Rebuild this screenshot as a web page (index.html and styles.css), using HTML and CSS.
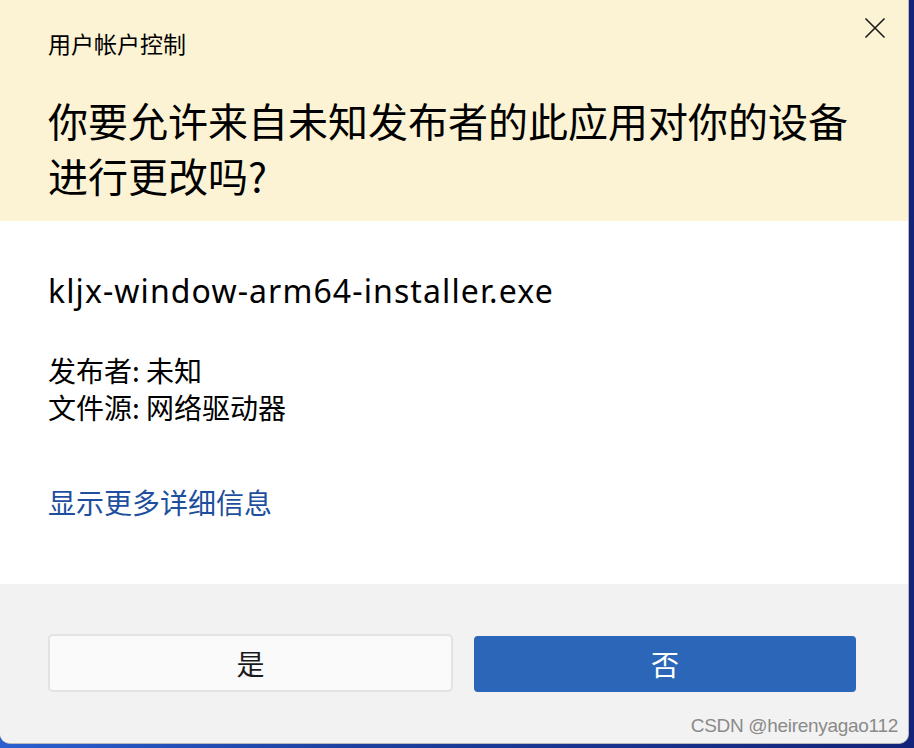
FILE: index.html
```html
<!DOCTYPE html>
<html lang="zh-CN">
<head>
<meta charset="utf-8">
<title>用户帐户控制</title>
<link rel="stylesheet" href="styles.css">
</head>
<body>
<div class="dialog">
  <header class="header">
    <div class="top-row">
      <div class="uac-label">用户帐户控制</div>
      <button class="close" aria-label="关闭">
        <svg width="22" height="22" viewBox="0 0 22 22"><path d="M1.5 1.5 L20.5 20.5 M20.5 1.5 L1.5 20.5" stroke="#1a1a1a" stroke-width="1.6" fill="none"/></svg>
      </button>
    </div>
    <h1 class="title">你要允许来自未知发布者的此应用对你的设备进行更改吗?</h1>
  </header>
  <section class="body">
    <div class="filename">kljx-window-arm64-installer.exe</div>
    <div class="meta">
      <div>发布者: 未知</div>
      <div>文件源: 网络驱动器</div>
    </div>
    <a class="more" href="#">显示更多详细信息</a>
  </section>
  <footer class="footer">
    <button class="btn btn-yes">是</button>
    <button class="btn btn-no">否</button>
  </footer>
  <div class="watermark">CSDN @heirenyagao112</div>
</div>
</body>
</html>
```
FILE: styles.css
```css
html, body {
  margin: 0;
  padding: 0;
}
body {
  width: 914px;
  height: 748px;
  overflow: hidden;
  background: linear-gradient(90deg, #2a5fd0 0%, #1c3f9e 40%, #13237a 100%);
  font-family: "Noto Sans CJK SC", "Noto Sans", sans-serif;
  color: #000;
}
.dialog {
  position: relative;
  box-sizing: border-box;
  width: 909px;
  height: 744px;
  border-right: 1px solid #b8b8bc;
  border-bottom: 1px solid #b8b8bc;
  border-radius: 0 0 10px 10px;
  overflow: hidden;
  display: flex;
  flex-direction: column;
  background: #f2f2f2;
}
.header {
  box-sizing: border-box;
  height: 221px;
  background: #fcf3d4;
  padding: 12px 22px 0 48px;
}
.top-row {
  display: flex;
  justify-content: space-between;
  align-items: flex-start;
}
.uac-label {
  margin-top: 15px;
  font-size: 23px;
  line-height: 32px;
}
.close {
  border: 0;
  background: transparent;
  padding: 0;
  margin-top: 5px;
  width: 22px;
  height: 22px;
  cursor: pointer;
}
.close svg { display: block; }
.title {
  margin: 34px 0 0 0;
  font-weight: 400;
  font-size: 40px;
  line-height: 55px;
  width: 810px;
}
.body {
  box-sizing: border-box;
  height: 363px;
  background: #ffffff;
  padding: 49px 48px 0 48px;
  display: flex;
  flex-direction: column;
  align-items: flex-start;
}
.filename {
  font-family: "Noto Sans", "Open Sans", sans-serif;
  font-size: 32px;
  line-height: 42px;
  letter-spacing: 1.1px;
}
.meta {
  margin-top: 40px;
  font-size: 28px;
  line-height: 37px;
}
.more {
  margin-top: 57px;
  font-size: 28px;
  line-height: 38px;
  color: #1d4f9e;
  text-decoration: none;
}
.footer {
  flex: 1;
  display: flex;
  align-items: flex-start;
  gap: 21px;
  padding: 50px 52px 0 48px;
  background: #f2f2f2;
}
.btn {
  box-sizing: border-box;
  height: 58px;
  font-family: "Noto Sans CJK SC", sans-serif;
  font-size: 28px;
  border-radius: 5px;
  cursor: pointer;
  padding: 0;
}
.btn-yes {
  width: 405px;
  background: #fafafa;
  border: 2px solid #e3e3e3;
  color: #1a1a1a;
}
.btn-no {
  width: 382px;
  height: 56px;
  margin-top: 2px;
  background: #2b66b8;
  border: 0;
  color: #ffffff;
  border-radius: 4px;
}
.watermark {
  position: absolute;
  right: 10px;
  bottom: 6px;
  font-family: "Liberation Sans", sans-serif;
  font-size: 19px;
  line-height: 22px;
  color: #8a8a8a;
  letter-spacing: -0.3px;
}
```
